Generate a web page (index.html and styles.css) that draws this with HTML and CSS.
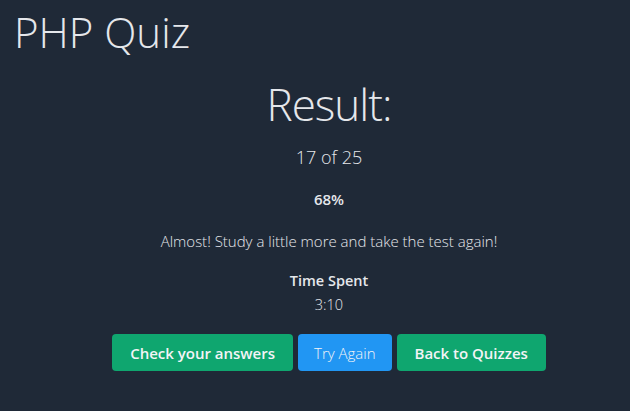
FILE: index.html
```html
<!DOCTYPE html>
<html>
<head>
<meta charset="utf-8">
<link rel="stylesheet" href="styles.css">
</head>
<body>
<header class="top">
  <h1 class="title">PHP Quiz</h1>
</header>
<main class="result">
  <h2 class="heading">Result:</h2>
  <p class="score">17 of 25</p>
  <p class="percent">68%</p>
  <p class="message">Almost! Study a little more and take the test again!</p>
  <p class="label">Time Spent</p>
  <p class="time">3:10</p>
  <div class="actions">
    <a class="btn btn-green">Check your answers</a>
    <a class="btn btn-blue">Try Again</a>
    <a class="btn btn-green">Back to Quizzes</a>
  </div>
</main>
</body>
</html>
```
FILE: styles.css
```css
html, body {
  margin: 0;
  padding: 0;
  background: #1f2937;
  color: #e5e7eb;
  font-family: "Open Sans", "Noto Sans", sans-serif;
  height: 100%;
}
.top {
  padding: 7px 14px 0;
}
.title {
  margin: 0;
  font-size: 42px;
  font-weight: 300;
  line-height: 50px;
}
.result {
  text-align: center;
  padding: 20px 0 0 28px;
}
.heading {
  margin: 0;
  font-size: 44px;
  font-weight: 300;
  line-height: 54px;
  letter-spacing: -1px;
}
.score {
  margin: 14px 0 0;
  font-size: 18px;
  font-weight: 300;
  line-height: 24px;
}
.percent {
  margin: 20px 0 0;
  font-size: 15px;
  font-weight: 600;
  line-height: 20px;
}
.message {
  margin: 20px 0 0;
  font-size: 15px;
  font-weight: 300;
  line-height: 24px;
}
.label {
  margin: 18px 0 0;
  font-size: 14.5px;
  font-weight: 600;
  line-height: 20px;
}
.time {
  margin: 3px 0 0;
  font-size: 14.5px;
  font-weight: 300;
  line-height: 22px;
}
.actions {
  margin-top: 18px;
  display: flex;
  justify-content: center;
  gap: 5px;
}
.btn {
  display: inline-flex;
  align-items: center;
  justify-content: center;
  height: 37px;
  padding: 0 18px;
  border-radius: 4px;
  font-size: 15px;
  color: #f3f4f6;
  box-sizing: border-box;
}
.btn-green {
  background: #0fa66f;
  font-weight: 600;
}
.btn-blue {
  background: #2196f3;
  font-weight: 300;
  padding: 0 16px;
}
```
